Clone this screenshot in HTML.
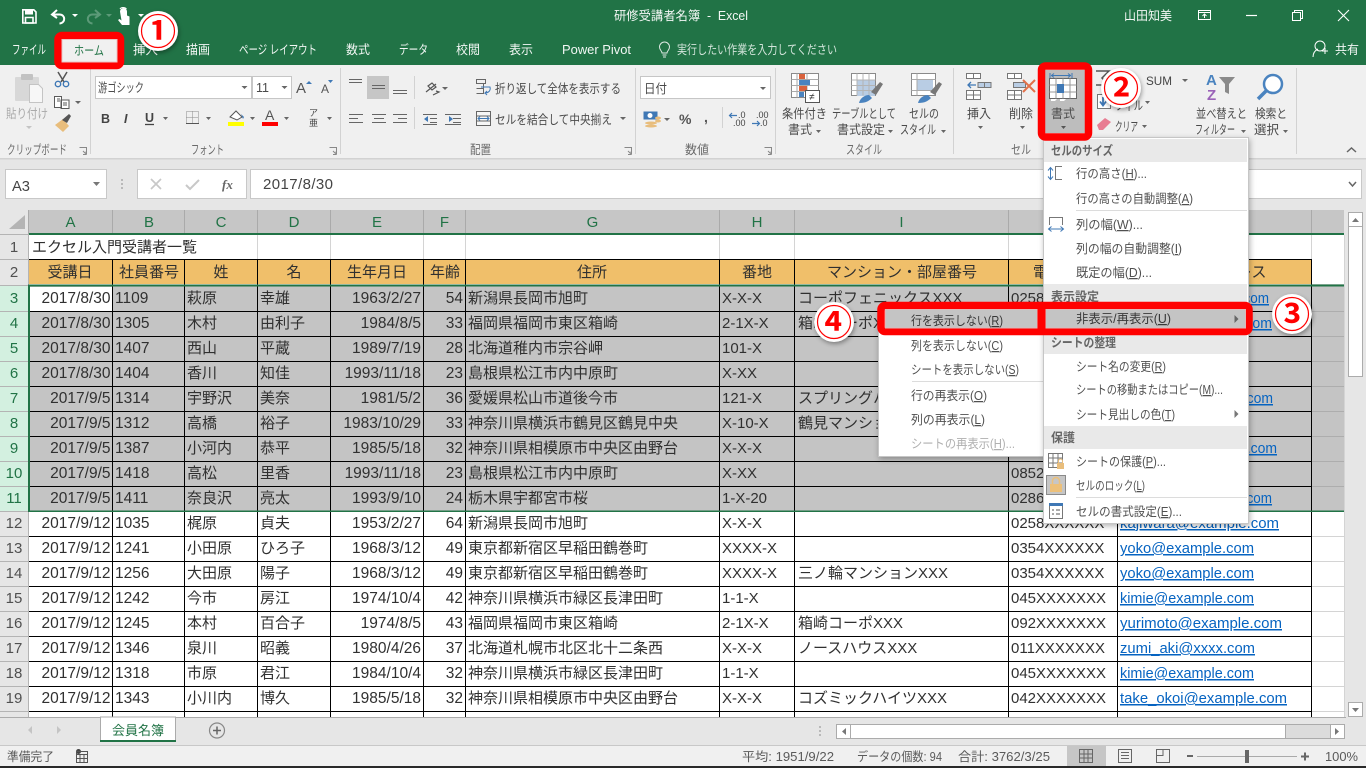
<!DOCTYPE html>
<html lang="ja">
<head>
<meta charset="utf-8">
<title>研修受講者名簿 - Excel</title>
<style>
html,body{margin:0;padding:0;background:#e6e6e6;width:1366px;height:768px;overflow:hidden}
svg{display:block;font-family:"Liberation Sans","Noto Sans CJK JP",sans-serif}
text{white-space:pre}
.t{font-size:12.5px;fill:#f2f7f4}
.u{font-size:12.5px;fill:#4a4a4a}
.g{font-size:12.5px;fill:#6a6a6a}
.d{font-size:12.5px;fill:#aaa}
.m{font-size:12.5px;fill:#505050}
.b{font-size:12.5px;fill:#666;font-weight:bold}
.s{font-size:12.5px;fill:#5a5a5a}
.c{font-size:15px;fill:#303030}
.n{font-size:15.5px;fill:#303030}
.e{text-anchor:end}
.h{text-anchor:middle}
.l{font-size:15px;fill:#0563c1;text-decoration:underline}
.rn{font-size:15px;fill:#505050;text-anchor:middle}
.rs{font-size:15px;fill:#217346;text-anchor:middle}
.cl{font-size:15px;fill:#217346;text-anchor:middle}
.bd{font-size:37px;font-weight:bold;fill:#f00;text-anchor:middle;font-family:"Noto Sans CJK JP",sans-serif}
</style>
</head>
<body>
<svg width="1366" height="768" viewBox="0 0 1366 768" xmlns="http://www.w3.org/2000/svg">
<!-- base bands -->
<rect width="1366" height="768" fill="#e6e6e6"/>
<rect width="1366" height="65" fill="#217346"/>
<rect y="65" width="1366" height="93" fill="#f0f0f0"/>
<rect y="158" width="1366" height="1.5" fill="#d2d2d2"/>

<!-- title bar -->
<g fill="none" stroke="#fff" stroke-width="1.6">
<path d="M22.8 9.8h11l2.2 2.2v11H22.8z"/>
<path d="M25.5 17.5h7.5v5.5h-7.5z"/>
</g>
<rect x="25" y="9.5" width="8" height="5" fill="#fff"/>
<path d="M57 10l-5 4.500 5 3.500M52.500 14.500h7c6 0 6.500 8.500 0 9" fill="none" stroke="#fff" stroke-width="2"/>
<path d="M72 14h6l-3 3z" fill="#fff"/>
<path d="M95 10l5 4.500-5 3.500M99.500 14.500h-7c-6 0-6.500 8.500 0 9" fill="none" stroke="#5c9a78" stroke-width="2"/>
<path d="M106 14h6l-3 3z" fill="#5c9a78"/>
<path d="M120 11.500a3.500 3.500 0 0 1 7 0v4l2.500 1v8.500h-7.500l-4-5 1.500-1 2 1.500z" fill="#fff"/>
<path d="M120 9c1-2 5-2 6.500 0" fill="none" stroke="#fff"/>
<path d="M138 14h6l-3 3z" fill="#fff"/>
<text class="t" x="614" y="20" textLength="134" lengthAdjust="spacingAndGlyphs">研修受講者名簿  -  Excel</text>
<text class="t" x="1124" y="20" textLength="48" lengthAdjust="spacingAndGlyphs">山田知美</text>
<path d="M1198.500 10.500h12v9h-12zM1198.500 12.500h12M1204.500 18v-4M1202.500 16l2-2 2 2" fill="none" stroke="#fff"/>
<path d="M1246 15.500h11" stroke="#fff" stroke-width="1.200"/>
<path d="M1292.500 12.500h8v8h-8zM1294.500 12.500v-2h8v8h-2" fill="none" stroke="#fff"/>
<path d="M1338 10l11 11M1349 10l-11 11" stroke="#fff" stroke-width="1.100"/>

<!-- tabs -->
<text class="t" x="12" y="54" textLength="34" lengthAdjust="spacingAndGlyphs">ファイル</text>
<text class="t" x="133" y="54" textLength="25" lengthAdjust="spacingAndGlyphs">挿入</text>
<text class="t" x="186" y="54" textLength="24" lengthAdjust="spacingAndGlyphs">描画</text>
<text class="t" x="239" y="54" textLength="78" lengthAdjust="spacingAndGlyphs">ページ レイアウト</text>
<text class="t" x="346" y="54" textLength="24" lengthAdjust="spacingAndGlyphs">数式</text>
<text class="t" x="399" y="54" textLength="29" lengthAdjust="spacingAndGlyphs">データ</text>
<text class="t" x="456" y="54" textLength="24" lengthAdjust="spacingAndGlyphs">校閲</text>
<text class="t" x="509" y="54" textLength="24" lengthAdjust="spacingAndGlyphs">表示</text>
<text class="t" x="562" y="54" textLength="69" lengthAdjust="spacingAndGlyphs">Power Pivot</text>
<path d="M662 53c0-2-2.500-3-2.500-6a5 5 0 0 1 10 0c0 3-2.500 4-2.500 6zM662.500 55h4M663 57h3" fill="none" stroke="#dfeae4"/>
<text class="t" x="677" y="54" textLength="160" lengthAdjust="spacingAndGlyphs" style="fill:#d3e5db">実行したい作業を入力してください</text>
<circle cx="1320" cy="46" r="5" fill="none" stroke="#fff"/>
<path d="M1313 57c0-5 3-7 5-8M1322 51h6M1325 48v6" fill="none" stroke="#fff"/>
<text class="t" x="1335" y="54" textLength="24" lengthAdjust="spacingAndGlyphs">共有</text>

<!-- ribbon dividers -->
<path d="M90.500 68v86M340.500 68v86M635.500 68v86M775.500 68v86M953.500 68v86M1296.500 68v86" stroke="#d2d2d2"/>

<!-- clipboard -->
<rect x="15" y="77" width="24" height="24" rx="1" fill="#d8d8d8"/>
<rect x="21" y="74" width="12" height="6" rx="1" fill="#c2c2c2"/>
<path d="M29.500 84.500h9l4 4v14h-13z" fill="#f7f7f7" stroke="#c4c4c4"/>
<text class="d" x="6" y="118" textLength="42" lengthAdjust="spacingAndGlyphs">貼り付け</text>
<path d="M26 126h6l-3 3z" fill="#c4c4c4"/>
<path d="M58 72l6 10M67 72l-6 10" stroke="#555" stroke-width="1.500"/>
<circle cx="58" cy="84" r="2.700" fill="none" stroke="#3f78b5" stroke-width="1.400"/>
<circle cx="66" cy="84" r="2.700" fill="none" stroke="#3f78b5" stroke-width="1.400"/>
<path d="M54.500 96.500h7v11h-7zM61 100h8v8.500h-8zM63 103h4M63 105h4M57 99h3M57 101h3" fill="#fff" stroke="#5a5a5a"/>
<path d="M75 101h6l-3 3z" fill="#666"/>
<path d="M55 125l8-6 6 7-6 6z" fill="#e8bd7c"/>
<path d="M62 120l7-6 2 2-4 7z" fill="#555"/>

<text class="g" x="7" y="154" textLength="60" lengthAdjust="spacingAndGlyphs">クリップボード</text>
<path d="M79.500 147.500h7v7M83 151l2.500 2.500M83 154.500h3v-3" fill="none" stroke="#888"/>

<!-- font -->
<rect x="95.500" y="76.500" width="156" height="22" fill="#fff" stroke="#c6c6c6"/>
<rect x="252.500" y="76.500" width="39" height="22" fill="#fff" stroke="#c6c6c6"/>
<text class="u" x="98" y="92" textLength="46" lengthAdjust="spacingAndGlyphs">游ゴシック</text>
<text class="u" x="256" y="92" textLength="13" lengthAdjust="spacingAndGlyphs">11</text>
<path d="M241.500 86h6l-3 3zM281.500 86h6l-3 3z" fill="#666"/>
<text x="296" y="93" style="font-size:15px;fill:#555">A</text>
<text x="321" y="93" style="font-size:12px;fill:#555">A</text>
<path d="M306 84l3-3 3 3z" fill="#3f78b5"/>
<path d="M328 80h5l-2.500 3z" fill="#3f78b5"/>
<text x="101" y="123" style="font-size:12.500px;font-weight:bold;fill:#444">B</text>
<text x="124" y="123" style="font-size:12.500px;font-style:italic;font-weight:bold;fill:#444">I</text>
<text x="145" y="122" style="font-size:12.500px;font-weight:bold;fill:#444">U</text>
<path d="M145 124.500h9" stroke="#444" stroke-width="1.300"/>
<path d="M163 117h5l-2.500 3z" fill="#666"/>
<path d="M186.500 111.500h12v12h-12zM186.500 117.500h12M192.500 111.500v12" fill="none" stroke="#8a8a8a" stroke-dasharray="1 1"/>
<path d="M186 123.500h13" stroke="#555"/>
<path d="M206 117h5l-2.500 3z" fill="#666"/>
<path d="M230 117l6-6 6 6-5 3z" fill="#fff" stroke="#555"/>
<path d="M241 114l3 3-1 2z" fill="#3f78b5"/>
<rect x="228" y="122" width="16" height="4" fill="#ff0"/>
<path d="M250 117h5l-2.500 3z" fill="#666"/>
<text x="265" y="120" style="font-size:14px;fill:#555">A</text>
<rect x="262" y="122" width="16" height="4" fill="#f00"/>
<path d="M284 117h5l-2.500 3z" fill="#666"/>
<text x="309" y="116" style="font-size:9px;fill:#444">ア</text>
<text x="309" y="126" style="font-size:9px;fill:#444">亜</text>
<path d="M327 117h5l-2.500 3z" fill="#666"/>
<text class="g" x="191" y="154" textLength="33" lengthAdjust="spacingAndGlyphs">フォント</text>
<path d="M329.500 147.500h7v7M333 151l2.500 2.500M333 154.500h3v-3" fill="none" stroke="#888"/>

<!-- alignment -->
<rect x="367" y="76" width="22" height="23" fill="#c6c6c6"/>
<path d="M349 79.500h13M349 82.500h13M372 85.500h13M372 88.500h13M393 90.500h14M393 93.500h14" stroke="#666"/>
<path d="M349 114.500h14M349 118.500h9M349 122.500h14M372 114.500h14M374 118.500h10M372 122.500h14M393 114.500h14M398 118.500h9M393 122.500h14" stroke="#666"/>
<path d="M426 92l10-8M428 86l4-3 4 4-4 3zM433 95l6-3-3-1" fill="none" stroke="#555" stroke-width="1.200"/>
<path d="M442 87h6l-3 3z" fill="#666"/>
<path d="M414.500 76v23M414.500 107v22" stroke="#d2d2d2"/>
<path d="M423 114.500h14M430 118.500h7M430 122.500h7M445 114.500h16M453 118.500h8M453 122.500h8M423 124.500h14M445 124.500h16" stroke="#666"/>
<path d="M428 116l-4 3 4 3zM449 116l4 3-4 3z" fill="#3f78b5"/>
<path d="M476.500 79.500h9v4h-9zM476.500 88.500h7v-5M476.500 93.500h7v-5" fill="none" stroke="#666"/>
<path d="M481 87h9c1 4-2 6-5 6l2-2m-2 2l2 2" fill="none" stroke="#3f78b5"/>
<text class="u" x="495" y="93" textLength="126" lengthAdjust="spacingAndGlyphs">折り返して全体を表示する</text>
<path d="M476.500 111.500h14v14h-14zM476.500 116h14M476.500 121h14M480 118.500h7" fill="#f7f7f7" stroke="#666"/>
<path d="M478 118.500h11M480 116.500l-2 2 2 2M487 116.500l2 2-2 2" fill="none" stroke="#3f78b5"/>
<text class="u" x="495" y="124" textLength="117" lengthAdjust="spacingAndGlyphs">セルを結合して中央揃え</text>
<path d="M620 117h6l-3 3z" fill="#666"/>
<text class="g" x="470" y="154" textLength="21" lengthAdjust="spacingAndGlyphs">配置</text>
<path d="M624.500 147.500h7v7M628 151l2.500 2.500M628 154.500h3v-3" fill="none" stroke="#888"/>

<!-- number -->
<rect x="640.500" y="76.500" width="130" height="22" fill="#fff" stroke="#c6c6c6"/>
<text class="u" x="644" y="93" textLength="23" lengthAdjust="spacingAndGlyphs">日付</text>
<path d="M760 87h6l-3 3z" fill="#666"/>
<rect x="643.500" y="111.500" width="14" height="8" fill="#3f78b5"/>
<circle cx="650" cy="115.500" r="2.500" fill="#fff"/>
<ellipse cx="651" cy="123" rx="6" ry="1.500" fill="#e8bd7c"/><ellipse cx="651" cy="126" rx="6" ry="1.500" fill="#e8bd7c"/>
<ellipse cx="658" cy="118" rx="3" ry="1.500" fill="#e8bd7c"/><ellipse cx="658" cy="121" rx="3" ry="1.500" fill="#e8bd7c"/>
<path d="M664 118h6l-3 3z" fill="#666"/>
<text x="679" y="124" style="font-size:14px;fill:#555;font-weight:bold">%</text>
<text x="704" y="122" style="font-size:14px;fill:#555;font-weight:bold">,</text>
<path d="M722.500 107v21" stroke="#d2d2d2"/>
<text x="738" y="118" style="font-size:9px;fill:#444">.0</text>
<text x="733" y="126" style="font-size:9px;fill:#444">.00</text>
<path d="M730 115.500h7M732 113l-2.500 2.500 2.500 2.500" fill="none" stroke="#3f78b5" stroke-width="1.200"/>
<text x="756" y="118" style="font-size:9px;fill:#444">.00</text>
<text x="760" y="126" style="font-size:9px;fill:#444">.0</text>
<path d="M752 123.500h7M757 121l2.500 2.500-2.500 2.500" fill="none" stroke="#3f78b5" stroke-width="1.200"/>
<text class="g" x="685" y="154" textLength="24" lengthAdjust="spacingAndGlyphs">数値</text>
<path d="M764.500 147.500h7v7M768 151l2.500 2.500M768 154.500h3v-3" fill="none" stroke="#888"/>

<!-- styles -->
<rect x="791.500" y="73.500" width="27" height="24" fill="#fff" stroke="#8a8a8a"/>
<path d="M797 73.500v24M807 73.500v24M791.500 79.500h27M791.500 85.500h27M791.500 91.500h27" stroke="#aaa"/>
<rect x="799" y="74" width="6" height="5" fill="#d9623d"/>
<rect x="799" y="80" width="11" height="5" fill="#4a83bf"/>
<rect x="799" y="86" width="8" height="5" fill="#d9623d"/>
<rect x="799" y="92" width="5" height="5" fill="#4a83bf"/>
<rect x="805.500" y="90.500" width="14" height="12" fill="#fff" stroke="#555"/>
<text x="809" y="100" style="font-size:10px;fill:#333">≠</text>
<text class="u" x="782" y="118" textLength="45" lengthAdjust="spacingAndGlyphs">条件付き</text>
<text class="u" x="788" y="134" textLength="24" lengthAdjust="spacingAndGlyphs">書式</text>
<path d="M816 130h5l-2.500 3z" fill="#666"/>
<rect x="851.500" y="73.500" width="24" height="22" fill="#fff" stroke="#8a8a8a"/>
<rect x="857" y="80" width="18" height="16" fill="#b9cde4"/>
<path d="M851.500 80h24M851.500 85.500h24M851.500 90.500h24M857 73.500v22M863 73.500v22M869 73.500v22" stroke="#b4b4b4"/>
<path d="M871 92l9-10 3 2-7 11z" fill="#777"/>
<path d="M859 103c1-5 6-8 10-8l3 3c-3 3-6 5-13 5z" fill="#4a83bf"/>
<text class="u" x="832" y="118" textLength="64" lengthAdjust="spacingAndGlyphs">テーブルとして</text>
<text class="u" x="837" y="134" textLength="48" lengthAdjust="spacingAndGlyphs">書式設定</text>
<path d="M888 130h5l-2.500 3z" fill="#666"/>
<rect x="911.500" y="73.500" width="24" height="22" fill="#fff" stroke="#8a8a8a"/>
<rect x="917" y="80" width="16" height="11" fill="#b9cde4"/>
<path d="M911.500 79.500h24M917 73.500v22M911.500 90.500h24" stroke="#aaa"/>
<path d="M930 92l9-10 3 2-7 11z" fill="#777"/>
<path d="M918 103c1-5 6-8 10-8l3 3c-3 3-6 5-13 5z" fill="#4a83bf"/>
<text class="u" x="909" y="118" textLength="30" lengthAdjust="spacingAndGlyphs">セルの</text>
<text class="u" x="900" y="134" textLength="36" lengthAdjust="spacingAndGlyphs">スタイル</text>
<path d="M941 130h5l-2.500 3z" fill="#666"/>
<text class="g" x="846" y="154" textLength="36" lengthAdjust="spacingAndGlyphs">スタイル</text>

<!-- cells -->
<path d="M966.500 73.500h14v5h-14zM973.500 73.500v5M966.500 90.500h14v9h-14zM973.500 90.500v9M966.500 95h14" fill="#fff" stroke="#777"/>
<path d="M978 82.500h13v5h-13zM984.500 82.500v5" fill="#b9cde4" stroke="#777"/>
<path d="M976 85h-8M971 82l-3 3 3 3" fill="none" stroke="#3f78b5" stroke-width="1.300"/>
<text class="u" x="967" y="118" textLength="24" lengthAdjust="spacingAndGlyphs">挿入</text>
<path d="M978 126h5l-2.500 3z" fill="#666"/>
<path d="M1007.500 73.500h14v5h-14zM1014.500 73.500v5M1007.500 90.500h14v9h-14zM1014.500 90.500v9M1007.500 95h14" fill="#fff" stroke="#777"/>
<rect x="1013.500" y="82.500" width="12" height="5" fill="#b9cde4" stroke="#777"/>
<path d="M1023 80l12 12M1035 80l-12 12" stroke="#e2704a" stroke-width="2"/>
<text class="u" x="1009" y="118" textLength="24" lengthAdjust="spacingAndGlyphs">削除</text>
<path d="M1020 126h5l-2.500 3z" fill="#666"/>
<text class="g" x="1011" y="154" textLength="20" lengthAdjust="spacingAndGlyphs">セル</text>

<!-- 書式 button -->
<rect x="1045" y="70" width="40" height="63" fill="#bdbdbd"/>
<path d="M1050 73v5M1072 73v5M1051 75.500h20M1054 73.500l-2.500 2 2.500 2M1068 73.500l2.500 2-2.500 2" fill="none" stroke="#3f78b5"/>
<rect x="1049.500" y="78.500" width="27" height="20" fill="#fff" stroke="#666"/>
<path d="M1056 78.500v20M1063 78.500v20M1070 78.500v20M1049.500 85h27M1049.500 92h27" stroke="#999"/>
<rect x="1057" y="84" width="7" height="9" fill="#3f78b5"/>
<path d="M1051 99h6l-2 2h-4zM1060 99h6l-2 2h-4z" fill="#fff"/>
<text class="u" x="1051" y="118" textLength="24" lengthAdjust="spacingAndGlyphs">書式</text>
<path d="M1061 126h5l-2.500 3z" fill="#555"/>

<!-- editing -->
<path d="M1096 71h13l-7 7 7 7h-13" fill="none" stroke="#555" stroke-width="1.500"/>
<text x="1146" y="85" style="font-size:12px;fill:#444" textLength="26" lengthAdjust="spacingAndGlyphs">SUM</text>
<path d="M1182 79h6l-3 3z" fill="#666"/>
<rect x="1097.500" y="94.500" width="13" height="14" fill="#fff" stroke="#777"/>
<path d="M1103 97v7M1100 101.500l3 4 3-4" fill="none" stroke="#3f78b5" stroke-width="1.800"/>
<text class="u" x="1115" y="110" textLength="28" lengthAdjust="spacingAndGlyphs">フィル</text>
<path d="M1145 101h5l-2.500 3z" fill="#666"/>
<path d="M1097 125l8-7 6 4-8 8h-4z" fill="#e87c92"/>
<text class="u" x="1115" y="131" textLength="23" lengthAdjust="spacingAndGlyphs">クリア</text>
<path d="M1142 125h5l-2.500 3z" fill="#666"/>
<text x="1206" y="85" style="font-size:15px;font-weight:bold;fill:#4a83bf">A</text>
<text x="1207" y="100" style="font-size:15px;font-weight:bold;fill:#9a63b8">Z</text>
<path d="M1219 77h16l-6 7v10l-4-2v-8z" fill="#8a8a8a"/>
<text class="u" x="1196" y="118" textLength="51" lengthAdjust="spacingAndGlyphs">並べ替えと</text>
<text class="u" x="1195" y="134" textLength="40" lengthAdjust="spacingAndGlyphs">フィルター</text>
<path d="M1241 130h5l-2.500 3z" fill="#666"/>
<circle cx="1273" cy="84" r="9" fill="#fff" stroke="#4a83bf" stroke-width="2.500"/>
<path d="M1266 91l-8 8" stroke="#4a83bf" stroke-width="3.500"/>
<text class="u" x="1255" y="118" textLength="32" lengthAdjust="spacingAndGlyphs">検索と</text>
<text class="u" x="1254" y="134" textLength="25" lengthAdjust="spacingAndGlyphs">選択</text>
<path d="M1283 130h5l-2.500 3z" fill="#666"/>
<path d="M1347 152l4.500-4 4.500 4" fill="none" stroke="#666" stroke-width="1.500"/>

<!-- formula bar -->
<rect x="5.500" y="169.500" width="101" height="29" fill="#fff" stroke="#c8c8c8"/>
<text x="12" y="191" style="font-size:15px;fill:#444" textLength="18" lengthAdjust="spacingAndGlyphs">A3</text>
<path d="M93 182h7l-3.500 4z" fill="#777"/>
<path d="M122 179v2M122 183v2M122 187v2" stroke="#aaa" stroke-width="1.500"/>
<rect x="137.500" y="169.500" width="109" height="29" fill="#fff" stroke="#c8c8c8"/>
<path d="M151 179l10 10M161 179l-10 10" stroke="#c8c8c8" stroke-width="1.700"/>
<path d="M186 185l4 4 9-9" fill="none" stroke="#c8c8c8" stroke-width="2"/>
<text x="222" y="189" style="font-size:13px;font-family:'Liberation Serif',serif;font-style:italic;font-weight:bold;fill:#666">fx</text>
<rect x="250.500" y="169.500" width="1111" height="29" fill="#fff" stroke="#c8c8c8"/>
<text x="263" y="189" style="font-size:15px;fill:#444" textLength="70" lengthAdjust="spacing">2017/8/30</text>
<path d="M1349 182l3.500 4 3.500-4" fill="none" stroke="#666" stroke-width="1.500"/>

<!-- grid backgrounds -->
<rect x="0" y="210" width="1345" height="507" fill="#e6e6e6"/>
<rect x="29" y="210" width="1315" height="24" fill="#c6c6c6"/>
<rect x="0" y="210" width="28.500" height="24" fill="#e6e6e6"/>
<path d="M25 215v14h-16z" fill="#b4b4b4"/>
<path d="M28.500 210v24M112.500 210v24M184.500 210v24M257.500 210v24M330.500 210v24M423.500 210v24M465.500 210v24M719.500 210v24M794.500 210v24M1008.500 210v24M1117.500 210v24M1311.500 210v24" stroke="#aaa"/>
<rect x="29" y="235" width="1315" height="482" fill="#fff"/>
<rect x="29" y="260" width="1282" height="24" fill="#f0bf6a"/>
<rect x="0" y="286" width="28" height="225" fill="#d3f0e0"/>
<rect x="29" y="286" width="1315" height="225" fill="#c4c4c4"/>
<rect x="30" y="287" width="82.500" height="24" fill="#fff"/>
<!-- row header lines -->
<path d="M0 234.500h28M0 259.500h28M0 285.500h28M0 311.500h28M0 336.500h28M0 361.500h28M0 386.500h28M0 411.500h28M0 436.500h28M0 461.500h28M0 486.500h28M0 511.500h28M0 536.500h28M0 561.500h28M0 586.500h28M0 611.500h28M0 636.500h28M0 661.500h28M0 686.500h28M0 711.500h28" stroke="#b4b4b4"/>
<path d="M28.500 234v483" stroke="#b4b4b4"/>
<!-- light gridlines -->
<path d="M185 234.500h1159M29 259.500h1283" stroke="#d4d4d4"/>
<path d="M257.500 235v24M330.500 235v24M423.500 235v24M465.500 235v24M719.500 235v24M794.500 235v24M1008.500 235v24M1117.500 235v24M1311.500 235v24" stroke="#d4d4d4"/>
<path d="M1312 284.500h32M1312 536.500h32M1312 561.500h32M1312 586.500h32M1312 611.500h32M1312 636.500h32M1312 661.500h32M1312 686.500h32M1312 711.500h32" stroke="#d4d4d4"/>
<path d="M1312 311.500h32M1312 336.500h32M1312 361.500h32M1312 386.500h32M1312 411.500h32M1312 436.500h32M1312 461.500h32M1312 486.500h32" stroke="#adadad"/>
<path d="M1344.500 235v482" stroke="#d4d4d4"/>
<!-- black table lines -->
<path d="M29 259.500h1283M29 311.500h1283M29 336.500h1283M29 361.500h1283M29 386.500h1283M29 411.500h1283M29 436.500h1283M29 461.500h1283M29 486.500h1283M29 536.500h1283M29 561.500h1283M29 586.500h1283M29 611.500h1283M29 636.500h1283M29 661.500h1283M29 686.500h1283M29 711.500h1283" stroke="#000"/>
<path d="M112.500 260v457M184.500 260v457M257.500 260v457M330.500 260v457M423.500 260v457M465.500 260v457M719.500 260v457M794.500 260v457M1008.500 260v457M1117.500 260v457M1311.500 260v457" stroke="#000"/>
<!-- selection -->
<rect x="29" y="233" width="1315" height="2" fill="#217346"/>
<rect x="28" y="284.500" width="1316" height="2" fill="#217346"/>
<rect x="28" y="510.500" width="1316" height="1.500" fill="#217346"/>
<rect x="28" y="285" width="2" height="226" fill="#217346"/>

<!-- column letters -->
<g class="cl">
<text class="cl" x="70.500" y="227">A</text><text class="cl" x="149" y="227">B</text><text class="cl" x="221" y="227">C</text><text class="cl" x="294" y="227">D</text><text class="cl" x="377" y="227">E</text><text class="cl" x="444.500" y="227">F</text><text class="cl" x="592.500" y="227">G</text><text class="cl" x="757" y="227">H</text><text class="cl" x="901.500" y="227">I</text><text class="cl" x="1063" y="227">J</text><text class="cl" x="1214.500" y="227">K</text>
</g>
<!-- row numbers -->
<text class="rn" x="14" y="252">1</text><text class="rn" x="14" y="277">2</text>
<text class="rs" x="14" y="303">3</text><text class="rs" x="14" y="328">4</text><text class="rs" x="14" y="353">5</text><text class="rs" x="14" y="378">6</text><text class="rs" x="14" y="403">7</text><text class="rs" x="14" y="428">8</text><text class="rs" x="14" y="453">9</text><text class="rs" x="14" y="478">10</text><text class="rs" x="14" y="503">11</text>
<text class="rn" x="14" y="528">12</text><text class="rn" x="14" y="553">13</text><text class="rn" x="14" y="578">14</text><text class="rn" x="14" y="603">15</text><text class="rn" x="14" y="628">16</text><text class="rn" x="14" y="653">17</text><text class="rn" x="14" y="678">18</text><text class="rn" x="14" y="703">19</text>

<!-- sheet text -->
<text class="c" x="32" y="252">エクセル入門受講者一覧</text>
<g transform="translate(0 277)">
<text class="c h" x="70">受講日</text><text class="c h" x="149">社員番号</text><text class="c h" x="221">姓</text><text class="c h" x="294">名</text><text class="c h" x="377">生年月日</text><text class="c h" x="445">年齢</text><text class="c h" x="592">住所</text><text class="c h" x="757">番地</text><text class="c h" x="902">マンション・部屋番号</text><text class="c h" x="1063">電話番号</text><text class="c h" x="1214">メールアドレス</text>
</g>
<g transform="translate(0 303)"><text class="n e" x="110.500">2017/8/30</text><text class="n" x="115">1109</text><text class="c" x="187">萩原</text><text class="c" x="260">幸雄</text><text class="n e" x="421">1963/2/27</text><text class="n e" x="463">54</text><text class="c" x="468">新潟県長岡市旭町</text><text class="c" x="722">X-X-X</text><text class="c" x="798">コーポフェニックスXXX</text><text class="c" x="1011">0258XXXXXX</text><text class="l" x="1120" textLength="149" lengthAdjust="spacingAndGlyphs">hagiwara@example.com</text></g>
<g transform="translate(0 328)"><text class="n e" x="110.500">2017/8/30</text><text class="n" x="115">1305</text><text class="c" x="187">木村</text><text class="c" x="260">由利子</text><text class="n e" x="421">1984/8/5</text><text class="n e" x="463">33</text><text class="c" x="468">福岡県福岡市東区箱崎</text><text class="c" x="722">2-1X-X</text><text class="c" x="798">箱崎コーポXXX</text><text class="c" x="1011">092XXXXXXX</text><text class="l" x="1120" textLength="152" lengthAdjust="spacingAndGlyphs">yurimoto@example.com</text></g>
<g transform="translate(0 353)"><text class="n e" x="110.500">2017/8/30</text><text class="n" x="115">1407</text><text class="c" x="187">西山</text><text class="c" x="260">平蔵</text><text class="n e" x="421">1989/7/19</text><text class="n e" x="463">28</text><text class="c" x="468">北海道稚内市宗谷岬</text><text class="c" x="722">101-X</text></g>
<g transform="translate(0 378)"><text class="n e" x="110.500">2017/8/30</text><text class="n" x="115">1404</text><text class="c" x="187">香川</text><text class="c" x="260">知佳</text><text class="n e" x="421">1993/11/18</text><text class="n e" x="463">23</text><text class="c" x="468">島根県松江市内中原町</text><text class="c" x="722">X-XX</text></g>
<g transform="translate(0 403)"><text class="n e" x="110.500">2017/9/5</text><text class="n" x="115">1314</text><text class="c" x="187">宇野沢</text><text class="c" x="260">美奈</text><text class="n e" x="421">1981/5/2</text><text class="n e" x="463">36</text><text class="c" x="468">愛媛県松山市道後今市</text><text class="c" x="722">121-X</text><text class="c" x="798">スプリングハイツXXX</text><text class="l" x="1120" textLength="153" lengthAdjust="spacingAndGlyphs">unosawa@example.com</text></g>
<g transform="translate(0 428)"><text class="n e" x="110.500">2017/9/5</text><text class="n" x="115">1312</text><text class="c" x="187">高橋</text><text class="c" x="260">裕子</text><text class="n e" x="421">1983/10/29</text><text class="n e" x="463">33</text><text class="c" x="468">神奈川県横浜市鶴見区鶴見中央</text><text class="c" x="722">X-10-X</text><text class="c" x="798">鶴見マンションXXX</text></g>
<g transform="translate(0 453)"><text class="n e" x="110.500">2017/9/5</text><text class="n" x="115">1387</text><text class="c" x="187">小河内</text><text class="c" x="260">恭平</text><text class="n e" x="421">1985/5/18</text><text class="n e" x="463">32</text><text class="c" x="468">神奈川県相模原市中央区由野台</text><text class="c" x="722">X-X-X</text><text class="l" x="1120" textLength="157" lengthAdjust="spacingAndGlyphs">take_okoi@example.com</text></g>
<g transform="translate(0 478)"><text class="n e" x="110.500">2017/9/5</text><text class="n" x="115">1418</text><text class="c" x="187">高松</text><text class="c" x="260">里香</text><text class="n e" x="421">1993/11/18</text><text class="n e" x="463">23</text><text class="c" x="468">島根県松江市内中原町</text><text class="c" x="722">X-XX</text><text class="c" x="1011">0852XXXXXX</text></g>
<g transform="translate(0 503)"><text class="n e" x="110.500">2017/9/5</text><text class="n" x="115">1411</text><text class="c" x="187">奈良沢</text><text class="c" x="260">亮太</text><text class="n e" x="421">1993/9/10</text><text class="n e" x="463">24</text><text class="c" x="468">栃木県宇都宮市桜</text><text class="c" x="722">1-X-20</text><text class="c" x="1011">0286XXXXXX</text><text class="l" x="1120" textLength="152" lengthAdjust="spacingAndGlyphs">narasawa@example.com</text></g>
<g transform="translate(0 528)"><text class="n e" x="110.500">2017/9/12</text><text class="n" x="115">1035</text><text class="c" x="187">梶原</text><text class="c" x="260">貞夫</text><text class="n e" x="421">1953/2/27</text><text class="n e" x="463">64</text><text class="c" x="468">新潟県長岡市旭町</text><text class="c" x="722">X-X-X</text><text class="c" x="1011">0258XXXXXX</text><text class="l" x="1120" textLength="159" lengthAdjust="spacingAndGlyphs">kajiwara@example.com</text></g>
<g transform="translate(0 553)"><text class="n e" x="110.500">2017/9/12</text><text class="n" x="115">1241</text><text class="c" x="187">小田原</text><text class="c" x="260">ひろ子</text><text class="n e" x="421">1968/3/12</text><text class="n e" x="463">49</text><text class="c" x="468">東京都新宿区早稲田鶴巻町</text><text class="c" x="722">XXXX-X</text><text class="c" x="1011">0354XXXXXX</text><text class="l" x="1120" textLength="134" lengthAdjust="spacingAndGlyphs">yoko@example.com</text></g>
<g transform="translate(0 578)"><text class="n e" x="110.500">2017/9/12</text><text class="n" x="115">1256</text><text class="c" x="187">大田原</text><text class="c" x="260">陽子</text><text class="n e" x="421">1968/3/12</text><text class="n e" x="463">49</text><text class="c" x="468">東京都新宿区早稲田鶴巻町</text><text class="c" x="722">XXXX-X</text><text class="c" x="798">三ノ輪マンションXXX</text><text class="c" x="1011">0354XXXXXX</text><text class="l" x="1120" textLength="134" lengthAdjust="spacingAndGlyphs">yoko@example.com</text></g>
<g transform="translate(0 603)"><text class="n e" x="110.500">2017/9/12</text><text class="n" x="115">1242</text><text class="c" x="187">今市</text><text class="c" x="260">房江</text><text class="n e" x="421">1974/10/4</text><text class="n e" x="463">42</text><text class="c" x="468">神奈川県横浜市緑区長津田町</text><text class="c" x="722">1-1-X</text><text class="c" x="1011">045XXXXXXX</text><text class="l" x="1120" textLength="134" lengthAdjust="spacingAndGlyphs">kimie@example.com</text></g>
<g transform="translate(0 628)"><text class="n e" x="110.500">2017/9/12</text><text class="n" x="115">1245</text><text class="c" x="187">本村</text><text class="c" x="260">百合子</text><text class="n e" x="421">1974/8/5</text><text class="n e" x="463">43</text><text class="c" x="468">福岡県福岡市東区箱崎</text><text class="c" x="722">2-1X-X</text><text class="c" x="798">箱崎コーポXXX</text><text class="c" x="1011">092XXXXXXX</text><text class="l" x="1120" textLength="162" lengthAdjust="spacingAndGlyphs">yurimoto@example.com</text></g>
<g transform="translate(0 653)"><text class="n e" x="110.500">2017/9/12</text><text class="n" x="115">1346</text><text class="c" x="187">泉川</text><text class="c" x="260">昭義</text><text class="n e" x="421">1980/4/26</text><text class="n e" x="463">37</text><text class="c" x="468">北海道札幌市北区北十二条西</text><text class="c" x="722">X-X-X</text><text class="c" x="798">ノースハウスXXX</text><text class="c" x="1011">011XXXXXXX</text><text class="l" x="1120" textLength="135" lengthAdjust="spacingAndGlyphs">zumi_aki@xxxx.com</text></g>
<g transform="translate(0 678)"><text class="n e" x="110.500">2017/9/12</text><text class="n" x="115">1318</text><text class="c" x="187">市原</text><text class="c" x="260">君江</text><text class="n e" x="421">1984/10/4</text><text class="n e" x="463">32</text><text class="c" x="468">神奈川県横浜市緑区長津田町</text><text class="c" x="722">1-1-X</text><text class="c" x="1011">045XXXXXXX</text><text class="l" x="1120" textLength="134" lengthAdjust="spacingAndGlyphs">kimie@example.com</text></g>
<g transform="translate(0 703)"><text class="n e" x="110.500">2017/9/12</text><text class="n" x="115">1343</text><text class="c" x="187">小川内</text><text class="c" x="260">博久</text><text class="n e" x="421">1985/5/18</text><text class="n e" x="463">32</text><text class="c" x="468">神奈川県相模原市中央区由野台</text><text class="c" x="722">X-X-X</text><text class="c" x="798">コズミックハイツXXX</text><text class="c" x="1011">042XXXXXXX</text><text class="l" x="1120" textLength="167" lengthAdjust="spacingAndGlyphs">take_okoi@example.com</text></g>

<!-- vertical scrollbar -->
<rect x="1345" y="210" width="21" height="507" fill="#e6e6e6"/>
<rect x="1348.500" y="212.500" width="14" height="14" fill="#fff" stroke="#ababab"/>
<path d="M1352 222l3.500-4 3.500 4z" fill="#777"/>
<rect x="1348.500" y="226.500" width="14" height="150" fill="#fff" stroke="#ababab"/>
<rect x="1348.500" y="702.500" width="14" height="14" fill="#fff" stroke="#ababab"/>
<path d="M1352 708h7l-3.500 4z" fill="#777"/>

<!-- bottom bar -->
<rect x="0" y="717" width="1366" height="28" fill="#e6e6e6"/>
<path d="M0 717.500h100M175 717.500h1171" stroke="#ababab"/>
<path d="M32 726l-4 4 4 4zM57 726l4 4-4 4z" fill="#c4c4c4"/>
<path d="M100.500 742v-25h75v25" fill="#fff" stroke="#ababab"/>
<rect x="100" y="740" width="76" height="2" fill="#217346"/>
<text x="112" y="735" style="font-size:13px;fill:#217346" textLength="52" lengthAdjust="spacing">会員名簿</text>
<circle cx="217" cy="730.500" r="7.500" fill="none" stroke="#888" stroke-width="1.200"/>
<path d="M213 730.500h8M217 726.500v8" stroke="#666" stroke-width="1.500"/>
<path d="M820 726v2M820 730v2M820 734v2" stroke="#aaa" stroke-width="1.500"/>
<rect x="836.500" y="724.500" width="508" height="14" fill="#dcdcdc" stroke="#ababab"/>
<rect x="836.500" y="724.500" width="14" height="14" fill="#fff" stroke="#ababab"/>
<rect x="850.500" y="724.500" width="435" height="14" fill="#fff" stroke="#ababab"/>
<rect x="1330.500" y="724.500" width="14" height="14" fill="#fff" stroke="#ababab"/>
<path d="M846 728l-4 3.500 4 3.500zM1335 728l4 3.500-4 3.500z" fill="#777"/>

<!-- status bar -->
<rect x="0" y="745" width="1366" height="21" fill="#f0f0f0"/>
<rect x="0" y="745" width="1366" height="1" fill="#c8c8c8"/>
<rect x="0" y="766" width="1366" height="2" fill="#2a2a2a"/>
<text class="s" x="7" y="761" textLength="47" lengthAdjust="spacingAndGlyphs">準備完了</text>
<circle cx="78.500" cy="751.500" r="2.500" fill="#444"/>
<path d="M76.500 751.500h11v11h-11zM76.500 754.500h11M80 754.500v8M84 754.500v8M76.500 758.500h11" fill="none" stroke="#555"/>
<text class="s" x="742" y="761" textLength="92" lengthAdjust="spacingAndGlyphs">平均: 1951/9/22</text>
<text class="s" x="857" y="761" textLength="85" lengthAdjust="spacingAndGlyphs">データの個数: 94</text>
<text class="s" x="958" y="761" textLength="92" lengthAdjust="spacingAndGlyphs">合計: 3762/3/25</text>
<rect x="1067" y="746" width="39" height="20" fill="#c6c6c6"/>
<path d="M1079.500 749.500h13v13h-13zM1079.500 754h13M1079.500 758h13M1084 749.500v13M1088 749.500v13" fill="none" stroke="#666"/>
<path d="M1118.500 749.500h13v13h-13zM1121 752.500h8M1121 755.500h8M1121 758.500h8" fill="none" stroke="#666"/>
<path d="M1156.500 749.500h13v13h-13zM1163 749.500v6h-6" fill="none" stroke="#666"/>
<path d="M1187 756h6" stroke="#666" stroke-width="2"/>
<path d="M1197 756.500h100" stroke="#aaa"/>
<rect x="1245" y="750" width="4" height="13" fill="#666"/>
<path d="M1301 756.500h8M1305 752.500v8" stroke="#666" stroke-width="2"/>
<text class="s" x="1325" y="761" textLength="33" lengthAdjust="spacingAndGlyphs">100%</text>

<!-- submenu -->
<rect x="878.500" y="310" width="165" height="146.500" fill="#fff" stroke="#c6c6c6" style="filter:drop-shadow(1px 2px 3px rgba(0,0,0,.3))"/>
<text class="m" x="911" y="350" textLength="92" lengthAdjust="spacingAndGlyphs">列を表示しない(<tspan text-decoration="underline">C</tspan>)</text>
<text class="m" x="911" y="374" textLength="108" lengthAdjust="spacingAndGlyphs">シートを表示しない(<tspan text-decoration="underline">S</tspan>)</text>
<path d="M912 381.500h131" stroke="#dcdcdc"/>
<text class="m" x="911" y="400" textLength="76" lengthAdjust="spacingAndGlyphs">行の再表示(<tspan text-decoration="underline">O</tspan>)</text>
<text class="m" x="911" y="424" textLength="74" lengthAdjust="spacingAndGlyphs">列の再表示(<tspan text-decoration="underline">L</tspan>)</text>
<text class="m" x="911" y="448" textLength="104" lengthAdjust="spacingAndGlyphs" style="fill:#b0b0b0">シートの再表示(<tspan text-decoration="underline">H</tspan>)...</text>

<!-- main menu -->
<rect x="1043.500" y="137.500" width="205" height="386" fill="#fff" stroke="#c6c6c6" style="filter:drop-shadow(1px 2px 3px rgba(0,0,0,.3))"/>
<rect x="1044" y="139" width="203" height="23" fill="#e9e9e9"/>
<text class="b" x="1051" y="155" textLength="62" lengthAdjust="spacingAndGlyphs">セルのサイズ</text>
<path d="M1050.500 168v11M1048 170.500l2.500-3 2.500 3M1048 176.500l2.500 3 2.500-3" fill="none" stroke="#3f78b5"/>
<path d="M1062 166.500h-6.500v13h6.500" fill="none" stroke="#777"/>
<text class="m" x="1076" y="178" textLength="71" lengthAdjust="spacingAndGlyphs">行の高さ(<tspan text-decoration="underline">H</tspan>)...</text>
<text class="m" x="1076" y="203" textLength="117" lengthAdjust="spacingAndGlyphs">行の高さの自動調整(<tspan text-decoration="underline">A</tspan>)</text>
<path d="M1076 210.500h171" stroke="#dcdcdc"/>
<path d="M1049.500 225v-7.500h13v7.500" fill="none" stroke="#777"/>
<path d="M1049 229h14M1051.500 226.500l-3 2.500 3 2.500M1060.500 226.500l3 2.500-3 2.500" fill="none" stroke="#3f78b5"/>
<text class="m" x="1076" y="229" textLength="67" lengthAdjust="spacingAndGlyphs">列の幅(<tspan text-decoration="underline">W</tspan>)...</text>
<text class="m" x="1076" y="253" textLength="106" lengthAdjust="spacingAndGlyphs">列の幅の自動調整(<tspan text-decoration="underline">I</tspan>)</text>
<text class="m" x="1076" y="277" textLength="76" lengthAdjust="spacingAndGlyphs">既定の幅(<tspan text-decoration="underline">D</tspan>)...</text>
<rect x="1044" y="284" width="203" height="24" fill="#e9e9e9"/>
<text class="b" x="1051" y="301" textLength="48" lengthAdjust="spacingAndGlyphs">表示設定</text>
<rect x="1044" y="333" width="203" height="21" fill="#e9e9e9"/>
<text class="b" x="1051" y="347" textLength="65" lengthAdjust="spacingAndGlyphs">シートの整理</text>
<text class="m" x="1076" y="371" textLength="90" lengthAdjust="spacingAndGlyphs">シート名の変更(<tspan text-decoration="underline">R</tspan>)</text>
<text class="m" x="1076" y="394" textLength="147" lengthAdjust="spacingAndGlyphs">シートの移動またはコピー(<tspan text-decoration="underline">M</tspan>)...</text>
<text class="m" x="1076" y="419" textLength="99" lengthAdjust="spacingAndGlyphs">シート見出しの色(<tspan text-decoration="underline">T</tspan>)</text>
<path d="M1234.500 410v8l4-4z" fill="#777"/>
<rect x="1044" y="426" width="203" height="23" fill="#e9e9e9"/>
<text class="b" x="1051" y="442" textLength="24" lengthAdjust="spacingAndGlyphs">保護</text>
<path d="M1048.500 453.500h14v14h-14zM1053 453.500v14M1058 453.500v14M1048.500 458h14M1048.500 463h14" fill="none" stroke="#777"/>
<rect x="1057" y="463" width="7" height="6" fill="#e8bd7c"/>
<path d="M1058.500 463v-2a2 2 0 0 1 4 0v2" fill="none" stroke="#e8bd7c"/>
<text class="m" x="1076" y="466" textLength="90" lengthAdjust="spacingAndGlyphs">シートの保護(<tspan text-decoration="underline">P</tspan>)...</text>
<rect x="1046.500" y="475.500" width="19" height="19" fill="#c6c6c6" stroke="#8a8a8a"/>
<rect x="1050" y="484" width="12" height="8" fill="#ecc07a"/>
<path d="M1052.500 484v-3a3.500 3.500 0 0 1 7 0v3" fill="none" stroke="#ecc07a" stroke-width="1.500"/>
<text class="m" x="1076" y="490" textLength="69" lengthAdjust="spacingAndGlyphs">セルのロック(<tspan text-decoration="underline">L</tspan>)</text>
<path d="M1076 497.500h171" stroke="#dcdcdc"/>
<rect x="1049.500" y="503.500" width="13" height="15" fill="#fff" stroke="#777"/>
<rect x="1049" y="503" width="14" height="3" fill="#3f78b5"/>
<path d="M1052 510h2M1056 510h4M1052 514h2M1056 514h4" stroke="#555"/>
<text class="m" x="1076" y="516" textLength="106" lengthAdjust="spacingAndGlyphs">セルの書式設定(<tspan text-decoration="underline">E</tspan>)...</text>

<!-- red highlights -->
<rect x="881" y="305.500" width="368" height="26" rx="4" fill="none" stroke="#f00" stroke-width="7.500"/>
<rect x="885.500" y="309.500" width="152" height="18.500" fill="#c4c4c4" stroke="#e0b8b8"/>
<rect x="1045.500" y="309.500" width="200" height="18.500" fill="#c4c4c4" stroke="#e0b8b8"/>
<rect x="1037.500" y="305" width="8" height="27" fill="#f00"/>
<text class="m" x="911" y="325" textLength="92" lengthAdjust="spacingAndGlyphs" style="fill:#383838">行を表示しない(<tspan text-decoration="underline">R</tspan>)</text>
<text class="m" x="1076" y="323" textLength="95" lengthAdjust="spacingAndGlyphs" style="fill:#383838">非表示/再表示(<tspan text-decoration="underline">U</tspan>)</text>
<path d="M1234.500 315v8l4-4z" fill="#666"/>
<rect x="58" y="35.500" width="62.500" height="30" rx="4" fill="#f0f0f0" stroke="#f00" stroke-width="7.500"/>
<rect x="62" y="39.500" width="55" height="22.500" fill="#f0f0f0" stroke="#e8c4c4"/>
<text x="74" y="55" style="font-size:12.5px;fill:#217346" textLength="30" lengthAdjust="spacingAndGlyphs">ホーム</text>
<rect x="1041.500" y="66" width="47" height="71" rx="4" fill="none" stroke="#f00" stroke-width="7.500"/>

<!-- numbered badges -->
<g style="filter:drop-shadow(1px 2px 2px rgba(0,0,0,.35))">
<circle cx="158" cy="31" r="20" fill="#fff"/>
<circle cx="1121" cy="88" r="20" fill="#fff"/>
<circle cx="1292" cy="314" r="20" fill="#fff"/>
<circle cx="834" cy="322" r="20" fill="#fff"/>
</g>
<text class="bd" x="158" y="44">①</text>
<text class="bd" x="1121" y="101">②</text>
<text class="bd" x="1292" y="327">③</text>
<text class="bd" x="834" y="335">④</text>
<g fill="none" stroke="#fff" stroke-width="5">
<circle cx="158" cy="31" r="17"/><circle cx="1121" cy="88" r="17"/><circle cx="1292" cy="314" r="17"/><circle cx="834" cy="322" r="17"/>
</g>
<g fill="none" stroke="#f00" stroke-width="1.200">
<circle cx="158" cy="31" r="16.500"/><circle cx="1121" cy="88" r="16.500"/><circle cx="1292" cy="314" r="16.500"/><circle cx="834" cy="322" r="16.500"/>
</g>
</svg>
</body>
</html>
